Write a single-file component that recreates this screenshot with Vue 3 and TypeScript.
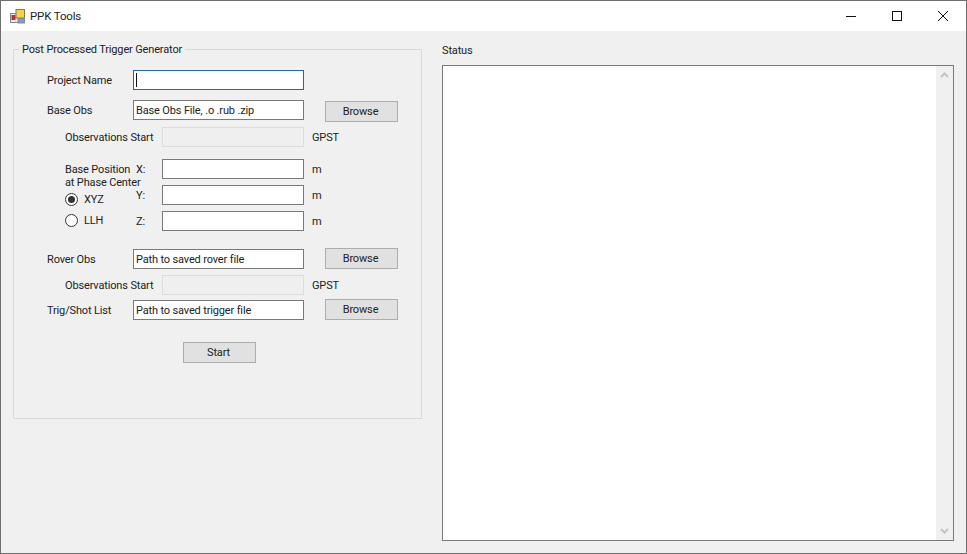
<template>
  <div class="window">
    <header class="titlebar">
      <svg class="app-icon" width="16" height="15" viewBox="0 0 16 15">
        <rect x="0.5" y="4.5" width="8" height="9" fill="#e8e8e8" stroke="#8a8a8a" />
        <rect x="1.5" y="6" width="4" height="5" fill="#b5303a" />
        <rect x="6" y="0.5" width="8.5" height="8.5" fill="#f3d25c" stroke="#8c7a3a" />
        <rect x="8" y="9.5" width="6.5" height="4.5" fill="#7f9ad6" stroke="#8a8a8a" />
      </svg>
      <span class="title">PPK Tools</span>
      <div class="caption-buttons">
        <button class="caption-btn" aria-label="Minimize">
          <svg width="10" height="10" viewBox="0 0 10 10"><path d="M0 5.5h10" stroke="#111" fill="none" /></svg>
        </button>
        <button class="caption-btn" aria-label="Maximize">
          <svg width="10" height="10" viewBox="0 0 10 10"><rect x="0.5" y="0.5" width="9" height="9" stroke="#111" fill="none" /></svg>
        </button>
        <button class="caption-btn" aria-label="Close">
          <svg width="10" height="10" viewBox="0 0 10 10"><path d="M0 0l10 10M10 0L0 10" stroke="#111" fill="none" /></svg>
        </button>
      </div>
    </header>

    <main class="content">
      <section class="group">
        <span class="legend">Post Processed Trigger Generator</span>

        <div class="row">
          <label class="row-label">Project Name</label>
          <div class="caret-wrap">
            <input class="field focused" type="text" />
            <span class="caret"></span>
          </div>
        </div>

        <div class="row row-base">
          <label class="row-label">Base Obs</label>
          <input class="field" type="text" value="Base Obs File, .o .rub .zip" />
          <button class="btn browse">Browse</button>
        </div>

        <div class="row row-sub row-start">
          <label class="sub-label">Observations Start</label>
          <input class="field short" type="text" disabled />
          <span class="unit gpst">GPST</span>
        </div>

        <div class="position">
          <div class="position-side">
            <div class="position-text">Base Position<br />at Phase Center</div>
            <label class="radio-row">
              <span class="radio checked"></span>XYZ
            </label>
            <label class="radio-row">
              <span class="radio"></span>LLH
            </label>
          </div>
          <div class="coords">
            <div v-for="axis in axes" :key="axis" class="coord">
              <span class="axis">{{ axis }}:</span>
              <input class="field short" type="text" />
              <span class="unit">m</span>
            </div>
          </div>
        </div>

        <div class="row row-rover">
          <label class="row-label">Rover Obs</label>
          <input class="field" type="text" value="Path to saved rover file" />
          <button class="btn browse">Browse</button>
        </div>

        <div class="row row-sub row-rover-start">
          <label class="sub-label">Observations Start</label>
          <input class="field short" type="text" disabled />
          <span class="unit gpst">GPST</span>
        </div>

        <div class="row row-trig">
          <label class="row-label">Trig/Shot List</label>
          <input class="field" type="text" value="Path to saved trigger file" />
          <button class="btn browse">Browse</button>
        </div>

        <button class="btn start">Start</button>
      </section>

      <section class="status">
        <div class="status-label">Status</div>
        <div class="status-box">
          <div class="status-text"></div>
          <div class="scrollbar">
            <svg width="9" height="6" viewBox="0 0 9 6"><path d="M1 5l3.5-3.5L8 5" stroke="#c4c4c4" stroke-width="2" fill="none" /></svg>
            <svg width="9" height="6" viewBox="0 0 9 6"><path d="M1 1l3.5 3.5L8 1" stroke="#c4c4c4" stroke-width="2" fill="none" /></svg>
          </div>
        </div>
      </section>
    </main>
  </div>
</template>

<script setup lang="ts">
const axes: string[] = ['X', 'Y', 'Z'];
</script>

<style>
html,
body {
  margin: 0;
  overflow: hidden;
}
</style>

<style scoped>
.window {
  box-sizing: border-box;
  width: 967px;
  height: 554px;
  display: flex;
  flex-direction: column;
  border: 1px solid #6f6f6f;
  background: #f0f0f0;
  font-family: Roboto, "Liberation Sans", Arial, sans-serif;
  font-size: 11px;
  letter-spacing: -0.15px;
  color: #222;
}

.titlebar {
  height: 30px;
  flex: none;
  display: flex;
  align-items: center;
  background: #fff;
  padding-left: 9px;
}

.app-icon {
  margin-right: 4px;
}

.title {
  font-size: 11.5px;
}

.caption-buttons {
  margin-left: auto;
  display: flex;
}

.caption-btn {
  width: 46px;
  height: 30px;
  padding: 0;
  border: 0;
  background: none;
  display: flex;
  align-items: center;
  justify-content: center;
}

.content {
  flex: 1;
  display: flex;
  align-items: flex-start;
  padding: 18px 12px 12px 12px;
}

.group {
  position: relative;
  box-sizing: border-box;
  width: 409px;
  height: 370px;
  border: 1px solid #d9d9d9;
  padding: 20px 0 0 33px;
}

.legend {
  position: absolute;
  left: 5px;
  top: -7px;
  padding: 0 3px;
  background: #f0f0f0;
  line-height: 14px;
}

.row {
  display: flex;
  align-items: center;
  height: 20px;
}

.row-label {
  width: 86px;
  flex: none;
}

.row-base {
  margin-top: 10px;
}

.row-sub {
  padding-left: 18px;
}

.row-start {
  margin-top: 7px;
}

.row-rover {
  margin-top: 18px;
}

.row-rover-start {
  margin-top: 6px;
}

.row-trig {
  margin-top: 5px;
}

.sub-label {
  width: 79px;
  flex: none;
  margin-right: 18px;
  white-space: nowrap;
}

.caret-wrap {
  position: relative;
  height: 20px;
}

.caret {
  position: absolute;
  left: 3px;
  top: 3px;
  width: 1px;
  height: 14px;
  background: #111;
}

.field {
  box-sizing: border-box;
  display: block;
  width: 171px;
  height: 20px;
  flex: none;
  margin: 0;
  padding: 0 2px;
  border: 1px solid #7a7a7a;
  border-radius: 0;
  background: #fff;
  font: inherit;
  letter-spacing: inherit;
  color: inherit;
  outline: none;
}

.field.focused {
  border-color: #1f6a9f;
}

.field.short {
  width: 142px;
}

.field:disabled {
  border-color: #dcdcdc;
  background: #efefef;
}

.unit {
  margin-left: 8px;
}

.gpst {
  margin-left: 8px;
}

.btn {
  box-sizing: border-box;
  width: 73px;
  height: 21px;
  padding: 0 2px 0 0;
  border: 1px solid #adadad;
  border-radius: 0;
  background: #e1e1e1;
  font: inherit;
  letter-spacing: inherit;
  color: inherit;
}

.browse {
  margin-left: 21px;
  position: relative;
  top: 1px;
}

.row-rover .browse,
.row-trig .browse {
  top: -1px;
}

.start {
  display: block;
  margin: 22px 0 0 136px;
}

.position {
  display: flex;
  margin-top: 12px;
  padding-left: 18px;
}

.position-side {
  width: 71px;
  flex: none;
  white-space: nowrap;
}

.position-text {
  line-height: 13px;
  padding-top: 4px;
}

.radio-row {
  display: flex;
  align-items: center;
  height: 21px;
}

.radio {
  box-sizing: border-box;
  width: 13px;
  height: 13px;
  margin-right: 6px;
  border: 1px solid #333;
  border-radius: 50%;
  background: #fff;
  display: flex;
  align-items: center;
  justify-content: center;
}

.radio.checked::after {
  content: "";
  width: 7px;
  height: 7px;
  border-radius: 50%;
  background: #333;
}

.coords {
  display: flex;
  flex-direction: column;
  gap: 6px;
}

.coord {
  display: flex;
  align-items: center;
  height: 20px;
}

.axis {
  width: 26px;
  flex: none;
}

.status {
  margin-left: 20px;
  margin-top: -8px;
  flex: 1;
  align-self: stretch;
  display: flex;
  flex-direction: column;
}

.status-label {
  line-height: 14px;
  margin-top: 3px;
  margin-bottom: 7px;
}

.status-box {
  flex: 1;
  display: flex;
  border: 1px solid #7a7a7a;
  background: #fff;
}

.status-text {
  flex: 1;
}

.scrollbar {
  width: 17px;
  display: flex;
  flex-direction: column;
  justify-content: space-between;
  align-items: center;
  padding: 6px 0;
  background: #f0f0f0;
}
</style>
